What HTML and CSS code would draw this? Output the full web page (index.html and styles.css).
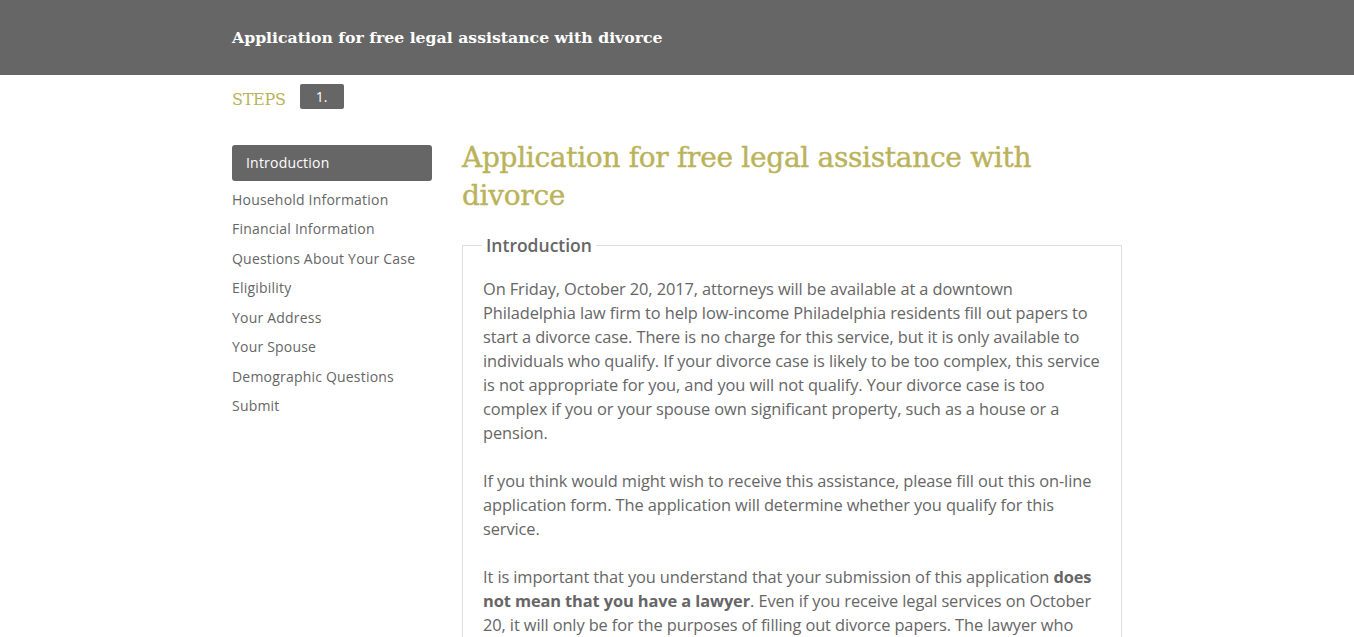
FILE: index.html
```html
<!DOCTYPE html>
<html>
<head>
<meta charset="utf-8">
<link rel="stylesheet" href="styles.css">
</head>
<body>
<header class="topbar">
  <div class="wrap">
    <div class="site-title">Application for free legal assistance with divorce</div>
  </div>
</header>
<div class="wrap">
  <div class="steps">
    <span class="steps-label">STEPS</span>
    <span class="step-box">1.</span>
  </div>
  <div class="layout">
    <nav class="sidebar">
      <div class="nav-item active">Introduction</div>
      <div class="nav-item">Household Information</div>
      <div class="nav-item">Financial Information</div>
      <div class="nav-item">Questions About Your Case</div>
      <div class="nav-item">Eligibility</div>
      <div class="nav-item">Your Address</div>
      <div class="nav-item">Your Spouse</div>
      <div class="nav-item">Demographic Questions</div>
      <div class="nav-item">Submit</div>
    </nav>
    <main class="main">
      <h1 class="page-title">Application for free legal assistance with divorce</h1>
      <fieldset class="box">
        <legend class="box-legend">Introduction</legend>
        <p>On Friday, October 20, 2017, attorneys will be available at a downtown Philadelphia law firm to help low-income Philadelphia residents fill out papers to start a divorce case. There is no charge for this service, but it is only available to individuals who qualify. If your divorce case is likely to be too complex, this service is not appropriate for you, and you will not qualify. Your divorce case is too complex if you or your spouse own significant property, such as a house or a pension.</p>
        <p>If you think would might wish to receive this assistance, please fill out this on-line application form. The application will determine whether you qualify for this service.</p>
        <p>It is important that you understand that your submission of this application <strong>does not mean that you have a lawyer</strong>. Even if you receive legal services on October 20, it will only be for the purposes of filling out divorce papers. The lawyer who helps you will not represent you in your divorce case after that day.</p>
      </fieldset>
    </main>
  </div>
</div>
</body>
</html>
```
FILE: styles.css
```css
html, body {
  margin: 0;
  padding: 0;
  background: #fff;
  font-family: "Open Sans", "Liberation Sans", sans-serif;
  color: #666;
}
.wrap {
  width: 890px;
  margin: 0 auto;
}
.topbar {
  background: #666666;
  height: 75px;
}
.topbar .wrap {
  height: 75px;
  display: flex;
  align-items: center;
}
.site-title {
  font-family: "DejaVu Serif", serif;
  font-weight: bold;
  font-size: 15.7px;
  color: #fff;
}
.steps {
  display: flex;
  align-items: center;
  gap: 14px;
  height: 44px;
}
.steps-label {
  font-family: "DejaVu Serif", serif;
  font-size: 16px;
  color: #bab35a;
  padding-top: 4px;
  letter-spacing: -0.3px;
}
.step-box {
  display: inline-block;
  background: #666;
  color: #fff;
  font-size: 14px;
  width: 44px;
  height: 25px;
  line-height: 25px;
  text-align: center;
  border-radius: 2px;
  margin-top: -1px;
}
.layout {
  display: flex;
  gap: 30px;
  margin-top: 26px;
}
.sidebar {
  width: 200px;
  flex: none;
}
.nav-item {
  font-size: 14px;
  line-height: 20px;
  padding: 4.75px 0;
  letter-spacing: 0.2px;
}
.nav-item.active {
  background: #666;
  color: #fff;
  border-radius: 3px;
  padding: 8px 14px;
  margin-bottom: 4px;
}
.main {
  flex: 1;
}
.page-title {
  font-family: "DejaVu Serif", serif;
  font-weight: normal;
  font-size: 28px;
  line-height: 38px;
  color: #bab35a;
  margin: -6px 0 18px 0;
  letter-spacing: -0.3px;
  -webkit-text-stroke: 0.4px #bab35a;
}
.box {
  border: 1px solid #ddd;
  margin: 0;
  padding: 20px 20px 10px 20px;
}
.box-legend {
  font-weight: 600;
  font-size: 17.5px;
  padding: 0 4px;
  margin-left: -1px;
  color: #666;
}
.box p {
  font-size: 16.4px;
  line-height: 24px;
  margin: 0 0 24px 0;
  letter-spacing: -0.1px;
}
.box strong {
  font-weight: 700;
}
```
